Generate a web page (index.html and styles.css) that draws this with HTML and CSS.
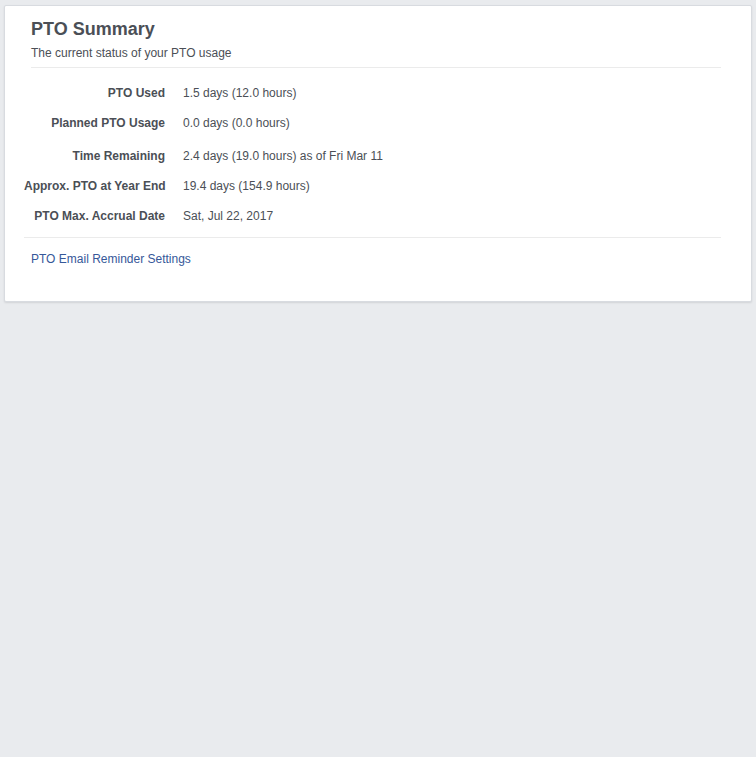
FILE: index.html
```html
<!DOCTYPE html>
<html>
<head>
<meta charset="utf-8">
<link rel="stylesheet" href="styles.css">
</head>
<body>
<div class="card">
  <h1 class="title">PTO Summary</h1>
  <div class="subtitle">The current status of your PTO usage</div>
  <div class="rows">
    <div class="row"><div class="label">PTO Used</div><div class="value">1.5 days (12.0 hours)</div></div>
    <div class="row"><div class="label">Planned PTO Usage</div><div class="value">0.0 days (0.0 hours)</div></div>
    <div class="row row-tall"><div class="label">Time Remaining</div><div class="value">2.4 days (19.0 hours) as of Fri Mar 11</div></div>
    <div class="row"><div class="label">Approx. PTO at Year End</div><div class="value">19.4 days (154.9 hours)</div></div>
    <div class="row"><div class="label">PTO Max. Accrual Date</div><div class="value">Sat, Jul 22, 2017</div></div>
  </div>
  <div class="footer"><a class="link" href="#">PTO Email Reminder Settings</a></div>
</div>
</body>
</html>
```
FILE: styles.css
```css
html, body {
  margin: 0;
  background: #e9ebee;
}
body {
  padding: 5px 4px;
  font-family: "Liberation Sans", Arial, sans-serif;
  color: #4b4f56;
  font-size: 12px;
}
.card {
  background: #fff;
  border: 1px solid #d8dbe0;
  border-radius: 2px;
  box-shadow: 0 1px 2px rgba(0, 0, 0, 0.1);
  padding: 12px 30px 34px 26px;
}
.title {
  margin: 0;
  font-size: 18px;
  line-height: 22px;
  font-weight: bold;
  color: #4b4f56;
}
.subtitle {
  margin-top: 5px;
  line-height: 16px;
  padding-bottom: 6px;
  border-bottom: 1px solid #ebebeb;
}
.rows {
  padding: 17px 0 13px;
  margin-left: -7px;
  border-bottom: 1px solid #ebebeb;
}
.row {
  display: grid;
  grid-template-columns: 141px 1fr;
  column-gap: 18px;
  line-height: 16px;
}
.row + .row {
  margin-top: 14px;
}
.row + .row-tall {
  margin-top: 17px;
}
.label {
  text-align: right;
  font-weight: bold;
  white-space: nowrap;
}
.value {
  white-space: nowrap;
}
.footer {
  padding-top: 13px;
  line-height: 16px;
}
.link {
  color: #365899;
  text-decoration: none;
}
```
